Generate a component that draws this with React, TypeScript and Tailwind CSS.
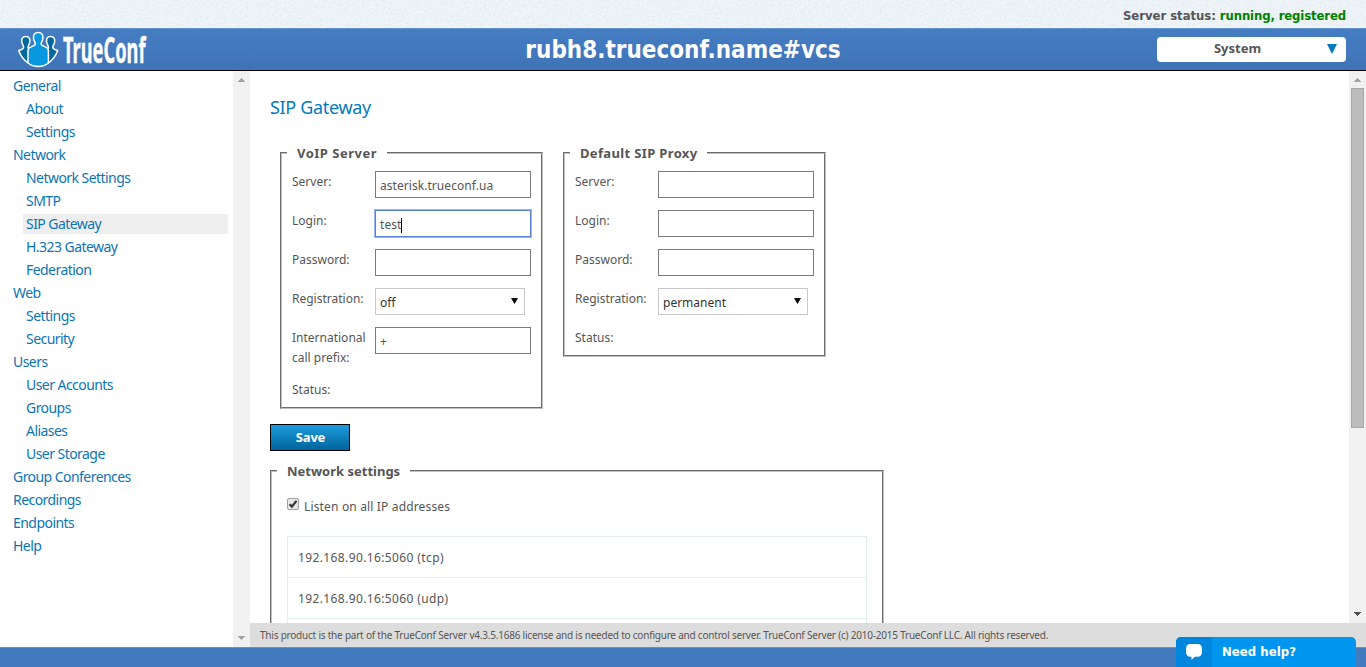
import React from "react";

type NavItem = { label: string; child?: boolean; active?: boolean };

const navItems: NavItem[] = [
  { label: "General" },
  { label: "About", child: true },
  { label: "Settings", child: true },
  { label: "Network" },
  { label: "Network Settings", child: true },
  { label: "SMTP", child: true },
  { label: "SIP Gateway", child: true, active: true },
  { label: "H.323 Gateway", child: true },
  { label: "Federation", child: true },
  { label: "Web" },
  { label: "Settings", child: true },
  { label: "Security", child: true },
  { label: "Users" },
  { label: "User Accounts", child: true },
  { label: "Groups", child: true },
  { label: "Aliases", child: true },
  { label: "User Storage", child: true },
  { label: "Group Conferences" },
  { label: "Recordings" },
  { label: "Endpoints" },
  { label: "Help" },
];

const sideFigure =
  "M8.800 7.500C5.300 7.500 4.300 10.200 4.800 13C5.200 15.600 6.600 16.500 6.600 18.300C6.600 20.300 4.800 20.800 1.700 21.600C3.500 26.500 6.500 31 11 34L14 30V21.500C12.500 21 11 20.300 11 18.300C11 16.500 12.400 15.600 12.800 13C13.300 10.200 12.300 7.500 8.800 7.500Z";

function Logo() {
  return (
    <svg width="132" height="42" viewBox="0 0 132 42" className="block overflow-visible">
      <g stroke="#fff" strokeWidth="1.500" strokeLinejoin="round">
        <path d={sideFigure} fill="#02699f" />
        <path d={sideFigure} fill="#02699f" transform="translate(42.400 0) scale(-1 1)" />
        <path
          d="M21.200 3.500C17.300 3.500 16.100 6.300 16.500 9.500C16.900 12.300 18.300 13.200 18.300 15C18.300 17.800 11 17 11 21.500V34C13.800 36.300 17 37.500 21.200 37.500C25.400 37.500 28.600 36.300 31.400 34V21.500C31.400 17 24.100 17.800 24.100 15C24.100 13.200 25.500 12.300 25.900 9.500C26.300 6.300 25.100 3.500 21.200 3.500Z"
          fill="#0798e0"
        />
      </g>
      <text
        x="46"
        y="34"
        textLength="82.500"
        lengthAdjust="spacingAndGlyphs"
        fill="#fff"
        stroke="#fff"
        strokeWidth="0.400"
        className="font-['Noto_Sans',sans-serif] text-[36px] font-bold"
      >
        TrueConf
      </text>
    </svg>
  );
}

function Arrow({ up, dark }: { up?: boolean; dark?: boolean }) {
  return (
    <svg width="17" height="17" viewBox="0 0 17 17" shapeRendering="crispEdges" className="block shrink-0">
      <path d={up ? "M5 11L8.500 7L12 11Z" : "M5 6L8.500 10L12 6Z"} fill={dark ? "#505050" : "#a3a3a3"} />
    </svg>
  );
}

function Row({ label, children, tall }: { label: string; children?: React.ReactNode; tall?: boolean }) {
  return (
    <div className={tall ? "flex h-[52px]" : "flex h-[39px]"}>
      <div className="w-[83px] shrink-0 pt-px leading-5">{label}</div>
      {children}
    </div>
  );
}

function Field({ value, focused }: { value?: string; focused?: boolean }) {
  return (
    <div
      className={
        focused
          ? "flex h-[27px] w-[156px] items-center border border-[#5a83cf] pt-[3px] pl-1 shadow-[0_0_0_1px_#98b7ee]"
          : "flex h-[27px] w-[156px] items-center border border-[#7b7b7b] pt-[3px] pl-1"
      }
    >
      <span className="tracking-[0.05px]">{value}</span>
      {focused && <span className="h-[15px] w-px bg-black" />}
    </div>
  );
}

function Select({ value }: { value: string }) {
  return (
    <div className="flex h-[27px] w-[150px] items-center justify-between border border-[#c8c8c8] pr-[6px] pl-1 text-[#333]">
      <span className="pt-[3px]">{value}</span>
      <svg width="7" height="6" viewBox="0 0 7 6" className="mb-[2px]">
        <path d="M0 0H7L3.500 6Z" fill="#000" />
      </svg>
    </div>
  );
}

const frame = "min-w-0 border-2 [border-style:groove] border-[#c0c0c0]";

export default function App() {
  return (
    <div className="flex h-[667px] w-[1366px] flex-col overflow-hidden bg-white font-['Noto_Sans',sans-serif] text-[12px] text-[#555]">
      <div className="relative flex h-7 shrink-0 items-center justify-end bg-[#eff5f9] pt-[3px] pr-5">
        <svg className="absolute inset-0 h-full w-full opacity-[0.07]">
          <filter id="grain" x="0" y="0" width="100%" height="100%">
            <feTurbulence type="fractalNoise" baseFrequency="0.45" numOctaves="2" />
            <feColorMatrix type="matrix" values="1.600 0 0 0 -0.200 1.600 0 0 0 -0.150 1.600 0 0 0 -0.100 0 0 0 0 1" />
          </filter>
          <rect width="100%" height="100%" filter="url(#grain)" />
        </svg>
        <div className="relative flex gap-1 font-['DejaVu_Sans_Condensed','DejaVu_Sans',sans-serif] text-[13px] font-bold">
          <span className="tracking-[-0.05px]">Server status:</span>
          <span className="tracking-[-0.13px] text-[#008000]">running, registered</span>
        </div>
      </div>

      <header className="grid h-[43px] shrink-0 grid-cols-[1fr_auto_1fr] items-center border-t border-b border-t-[#6293cf] border-b-black bg-linear-to-b from-[#457dc2] to-[#3f73b7] pr-5 pl-[17px]">
        <Logo />
        <h1 className="pl-[3px] font-['DejaVu_Sans_Condensed','DejaVu_Sans',sans-serif] text-[24px] leading-none font-bold text-white">
          rubh8.trueconf.name#vcs
        </h1>
        <div className="mb-[2px] flex h-[25px] w-[189px] items-center justify-self-end rounded-[4px] bg-white pr-[9px]">
          <span className="flex-1 pr-[9px] text-center text-[13px] font-bold">System</span>
          <svg width="10" height="10" viewBox="0 0 10 10">
            <path d="M0 0H10L5 10Z" fill="#0479bd" />
          </svg>
        </div>
      </header>

      <div className="flex h-[576px] shrink-0">
        <nav className="w-[233px] shrink-0 pt-[5px] pr-[5px] pl-[10px] text-[14px] tracking-[-0.55px] text-[#0c74b5]">
          {navItems.map((item, i) => (
            <div key={i} className={item.child ? "h-[23px] pl-[13px]" : "h-[23px]"}>
              <div className={item.active ? "h-5 bg-[#eee] pl-[3px] leading-5" : "h-5 pl-[3px] leading-5"}>{item.label}</div>
            </div>
          ))}
        </nav>
        <div className="flex w-[17px] shrink-0 flex-col justify-between bg-[#f1f1f1]">
          <Arrow up />
          <Arrow />
        </div>

        <div className="flex min-w-0 flex-1 flex-col">
          <div className="flex h-[552px] shrink-0">
            <main className="min-w-0 flex-1 overflow-hidden pl-5">
              <h2 className="mt-[23px] h-[49px] text-[18px] leading-[26px] tracking-[-0.33px] text-[#0479bd]">SIP Gateway</h2>
              <div className="flex items-start gap-5 pl-[10px]">
                <fieldset className={`${frame} h-[266px] w-[263px]`}>
                  <legend className="ml-[5px] h-5 w-[100px] px-[10px] text-[13px] leading-5 font-bold tracking-[0.5px] whitespace-nowrap">
                    VoIP Server
                  </legend>
                  <div className="pt-2 pl-[10px]">
                    <Row label="Server:"><Field value="asterisk.trueconf.ua" /></Row>
                    <Row label="Login:"><Field value="test" focused /></Row>
                    <Row label="Password:"><Field /></Row>
                    <Row label="Registration:"><Select value="off" /></Row>
                    <Row label="International call prefix:" tall><Field value="+" /></Row>
                    <Row label="Status:" />
                  </div>
                </fieldset>
                <fieldset className={`${frame} h-[214px] w-[263px]`}>
                  <legend className="ml-[5px] h-5 w-[137px] px-[10px] text-[13px] leading-5 font-bold tracking-[0.35px] whitespace-nowrap">
                    Default SIP Proxy
                  </legend>
                  <div className="pt-2 pl-[10px]">
                    <Row label="Server:"><Field /></Row>
                    <Row label="Login:"><Field /></Row>
                    <Row label="Password:"><Field /></Row>
                    <Row label="Registration:"><Select value="permanent" /></Row>
                    <Row label="Status:" />
                  </div>
                </fieldset>
              </div>
              <button className="mt-[15px] flex h-[27px] w-20 items-center justify-center border border-black bg-linear-to-b from-[#1e9cdf] to-[#00649b] pl-px text-[13px] font-bold tracking-[-0.2px] text-white">
                Save
              </button>
              <fieldset className={`${frame} mt-[10px] h-[240px] w-[614px]`}>
                <legend className="ml-[5px] h-5 w-[133px] px-[10px] text-[13px] leading-5 font-bold whitespace-nowrap">
                  Network settings
                </legend>
                <div className="px-[15px] pt-4">
                  <div className="flex h-[39px] items-start gap-[5px]">
                    <svg width="12" height="12" viewBox="0 0 12 12" className="mt-px block">
                      <rect x="0.500" y="0.500" width="11" height="11" rx="1.500" fill="#e6e6e6" stroke="#a0a0a0" />
                      <path d="M2.600 6.200L4.900 8.500L9.500 2.900" fill="none" stroke="#333" strokeWidth="2.200" />
                    </svg>
                    <span className="leading-5 tracking-[0.16px]">Listen on all IP addresses</span>
                  </div>
                  <div className="h-[200px] w-[580px] border border-[#e2edf0] tracking-[0.38px]">
                    <div className="h-[41px] border-b border-[#e2edf0] pl-[10px] leading-[41px]">192.168.90.16:5060 (tcp)</div>
                    <div className="h-[41px] border-b border-[#e2edf0] pl-[10px] leading-[41px]">192.168.90.16:5060 (udp)</div>
                  </div>
                </div>
              </fieldset>
            </main>
            <div className="flex w-[17px] shrink-0 flex-col items-center bg-[#f1f1f1]">
              <Arrow up />
              <div className="h-[340px] w-[13px] shrink-0 border border-[#a8a8a8] bg-[#bcbcbc]" />
              <div className="flex-1" />
              <Arrow dark />
            </div>
          </div>
          <footer className="h-6 shrink-0 bg-[#ddd] pl-[10px] text-[10px] leading-6 tracking-[-0.215px] whitespace-nowrap">
            This product is the part of the TrueConf Server v4.3.5.1686 license and is needed to configure and control server.
            TrueConf Server (c) 2010-2015 TrueConf LLC. All rights reserved.
          </footer>
        </div>
      </div>

      <div className="relative h-5 shrink-0 border-t border-[#5f92cf] bg-[#437bc0]">
        <div className="absolute right-[10px] bottom-0 flex h-[30px] w-[180px] overflow-hidden rounded-t-[5px] bg-[#0095ee] text-[13px] font-bold text-white">
          <div className="flex w-9 items-center justify-center bg-[#0086dd]">
            <svg width="16" height="16" viewBox="0 0 16 16">
              <path d="M4.500 0H11.500C14.500 0 16 2 16 4.500V8C16 11 14.500 12.800 11.500 12.800H8.800L5.500 16V12.800H4.500C1.500 12.800 0 11 0 8V4.500C0 2 1.500 0 4.500 0Z" fill="#fff" />
            </svg>
          </div>
          <span className="pl-[10px] font-['DejaVu_Sans_Condensed','DejaVu_Sans',sans-serif] leading-[29px] tracking-[0.05px]">Need help?</span>
        </div>
      </div>
    </div>
  );
}
